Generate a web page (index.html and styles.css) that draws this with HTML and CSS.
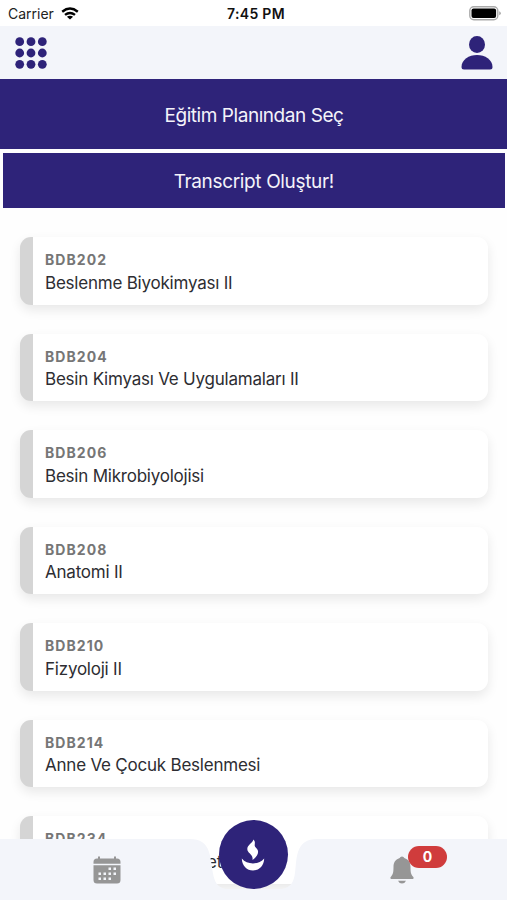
FILE: index.html
```html
<!DOCTYPE html>
<html lang="tr">
<head>
<meta charset="utf-8">
<title>Transcript</title>
<link rel="stylesheet" href="styles.css">
</head>
<body>
<div class="screen">
  <header class="status">
    <div class="carrier"><span>Carrier</span>
      <svg width="18" height="13" viewBox="0 0 18 13" fill="none" stroke="#000" stroke-width="2.4"><path d="M1.2 4.7Q9-1.6 16.8 4.7M4 7.9Q9 4 14 7.9"/><path d="M9 12.6 5.9 9.8Q9 7.5 12.1 9.8Z" fill="#000" stroke="none"/></svg>
    </div>
    <div class="time">7:45 PM</div>
    <svg class="battery" width="32" height="15" viewBox="0 0 32 15"><rect x=".8" y=".8" width="28" height="13" rx="4" fill="#fff" stroke="#aaa" stroke-width="1.4"/><rect x="2.5" y="2.5" width="24.6" height="9.6" rx="2" fill="#000"/><path d="M30.3 5.3q1.4.6 1.4 2t-1.4 2z" fill="#999"/></svg>
  </header>
  <nav class="topbar">
    <svg width="32" height="32" viewBox="0 0 32 32" fill="#2e2379"><circle cx="4.7" cy="4.7" r="4.4"/><circle cx="16" cy="4.7" r="4.4"/><circle cx="27.3" cy="4.7" r="4.4"/><circle cx="4.7" cy="16" r="4.4"/><circle cx="16" cy="16" r="4.4"/><circle cx="27.3" cy="16" r="4.4"/><circle cx="4.7" cy="27.3" r="4.4"/><circle cx="16" cy="27.3" r="4.4"/><circle cx="27.3" cy="27.3" r="4.4"/></svg>
    <svg width="32" height="34" viewBox="0 0 32 34" fill="#2e2379"><ellipse cx="16" cy="8.5" rx="8" ry="8.4"/><path d="M.5 31C.5 23.500 8 19 16 19s15.500 4.500 15.500 12q0 2.500-2.500 2.500H3Q.5 33.500.5 31Z"/></svg>
  </nav>
  <button class="btn plan">Eğitim Planından Seç</button>
  <button class="btn create">Transcript Oluştur!</button>
  <main class="list">
    <article class="card"><b>BDB202</b><span>Beslenme Biyokimyası II</span></article>
    <article class="card"><b>BDB204</b><span>Besin Kimyası Ve Uygulamaları II</span></article>
    <article class="card"><b>BDB206</b><span>Besin Mikrobiyolojisi</span></article>
    <article class="card"><b>BDB208</b><span>Anatomi II</span></article>
    <article class="card"><b>BDB210</b><span>Fizyoloji II</span></article>
    <article class="card"><b>BDB214</b><span>Anne Ve Çocuk Beslenmesi</span></article>
    <article class="card"><b>BDB234</b><span class="tail">et</span></article>
  </main>
  <footer class="tabs">
    <svg class="tabs-bg" width="507" height="61" viewBox="0 0 507 61" fill="#f3f5fa"><path d="M0 0H190Q205 0 209 13C214 28 210 50 228 50H279C300 50 293 28 298 13Q302 0 317 0H507V61H0Z"/></svg>
    <svg class="tab" width="28" height="28" viewBox="0 0 28 28"><path d="M4 2.500H5V.5H7V2.500H21V.5h2v2h1Q27.500 2.500 27.500 6V7.700H.5V6Q.5 2.500 4 2.500ZM.5 9.200h27V24Q27.500 27.500 24 27.500H4Q.5 27.500.5 24Z" fill="#969696"/><path d="M15.500 11.500h2.500v2.500h-2.500zM20.500 11.500H23v2.500h-2.500zM5.500 16.500H8V19H5.500zM10.500 16.500H13V19h-2.500zM15.500 16.500h2.500V19h-2.500zM20.500 16.500H23V19h-2.500zM5.500 21.500H8V24H5.500zM10.500 21.500H13V24h-2.500zM15.500 21.500h2.500V24h-2.500z" fill="#f3f5fa"/></svg>
    <div class="fab"><svg width="24" height="32" viewBox="0 0 24 32" fill="#fff"><path d="M12.500.5C11.500 4 6.300 6 6.300 10c0 4.500 6.200 5 5.200 11 3.500-3 6-5.500 5.500-9C16.500 9 13.500 8.500 13.700 6 13.900 4 14.300 2.500 12.500.5Z"/><path d="M.8 19.500C6 26 18 26 23.200 19.500 23 27 18 31.500 12 31.500S1 27 .8 19.500Z"/></svg></div>
    <div class="bell"><svg width="24" height="28" viewBox="0 0 24 28" fill="#969696"><path d="M12 .5q1.800 0 2.300 1.500C19 3.500 20.500 7 20.500 11c0 6 .7 7.500 2.600 9.700 1 1.200.4 2.300-.8 2.300H1.700C.5 23-.1 21.900.9 20.700 2.800 18.500 3.500 17 3.500 11c0-4 1.500-7.500 6.200-9Q10.200.5 12 .5ZM8 24.700h8q-1.200 2.800-4 2.800t-4-2.800Z"/></svg><span class="badge">0</span></div>
  </footer>
</div>
</body>
</html>
```
FILE: styles.css
```css
* { box-sizing: border-box; }
body { margin: 0; font-family: Inter, sans-serif; background: #fff; }
svg { display: block; flex: none; }
.screen { position: relative; height: 900px; overflow: hidden; display: flex; flex-direction: column; background: #fefefe; }
.status { flex: none; height: 26px; display: grid; grid-template-columns: 1fr auto 1fr; align-items: center; padding: 1px 6px 0 8px; background: #fff; font-size: 14px; color: #222; }
.carrier { display: flex; align-items: center; gap: 7px; }
.time { font-weight: 600; color: #111; letter-spacing: .3px; padding-left: 3px; }
.battery { justify-self: end; }
.topbar { flex: none; height: 53px; padding: 1px 14px 0 15px; display: flex; justify-content: space-between; align-items: center; background: #f3f5fa; }
.btn { flex: none; border: 0; padding: 0; font: 400 19px Inter, sans-serif; letter-spacing: -.45px; color: #f4f3fa; background: #2e2379; }
.plan { height: 70px; padding: 3px 0 0 1px; }
.create { height: 55px; margin: 4px 2.500px 0 3px; padding-top: 2px; letter-spacing: -.35px; }
.list { flex: none; padding: 29px 19px 0 20px; display: flex; flex-direction: column; gap: 29.500px; }
.card { flex: none; height: 67.500px; margin-bottom: -.5px; padding: 14px 0 0 12px; border-left: 13px solid #d5d5d5; border-radius: 11px; background: #fff; box-shadow: 0 5px 12px rgba(0,0,0,.09); display: flex; flex-direction: column; }
.card b { font-size: 14px; line-height: 17px; font-weight: 700; letter-spacing: 1.050px; color: #767676; }
.card span { margin-top: 3.500px; font-size: 17px; line-height: 22px; color: #2d2d32; letter-spacing: -.22px; }
.card .tail { padding-left: 162px; }
.tabs { position: absolute; left: 0; right: 0; bottom: 0; height: 61px; display: grid; grid-template-columns: 213px 80px 214px; justify-items: center; }
.tabs-bg { position: absolute; inset: 0; }
.tab { position: relative; margin-top: 17px; }
.fab { position: relative; width: 69px; height: 69px; margin-top: -19px; border-radius: 50%; background: #2e2379; display: flex; align-items: center; justify-content: center; }
.bell { position: relative; width: 24px; height: 28px; margin: 17px 0 0 4px; }
.badge { position: absolute; left: 18px; top: -10px; width: 39px; height: 22px; border-radius: 11px; background: #d03c3c; color: #fff; font-size: 14px; line-height: 22px; font-weight: 700; text-align: center; }
```
